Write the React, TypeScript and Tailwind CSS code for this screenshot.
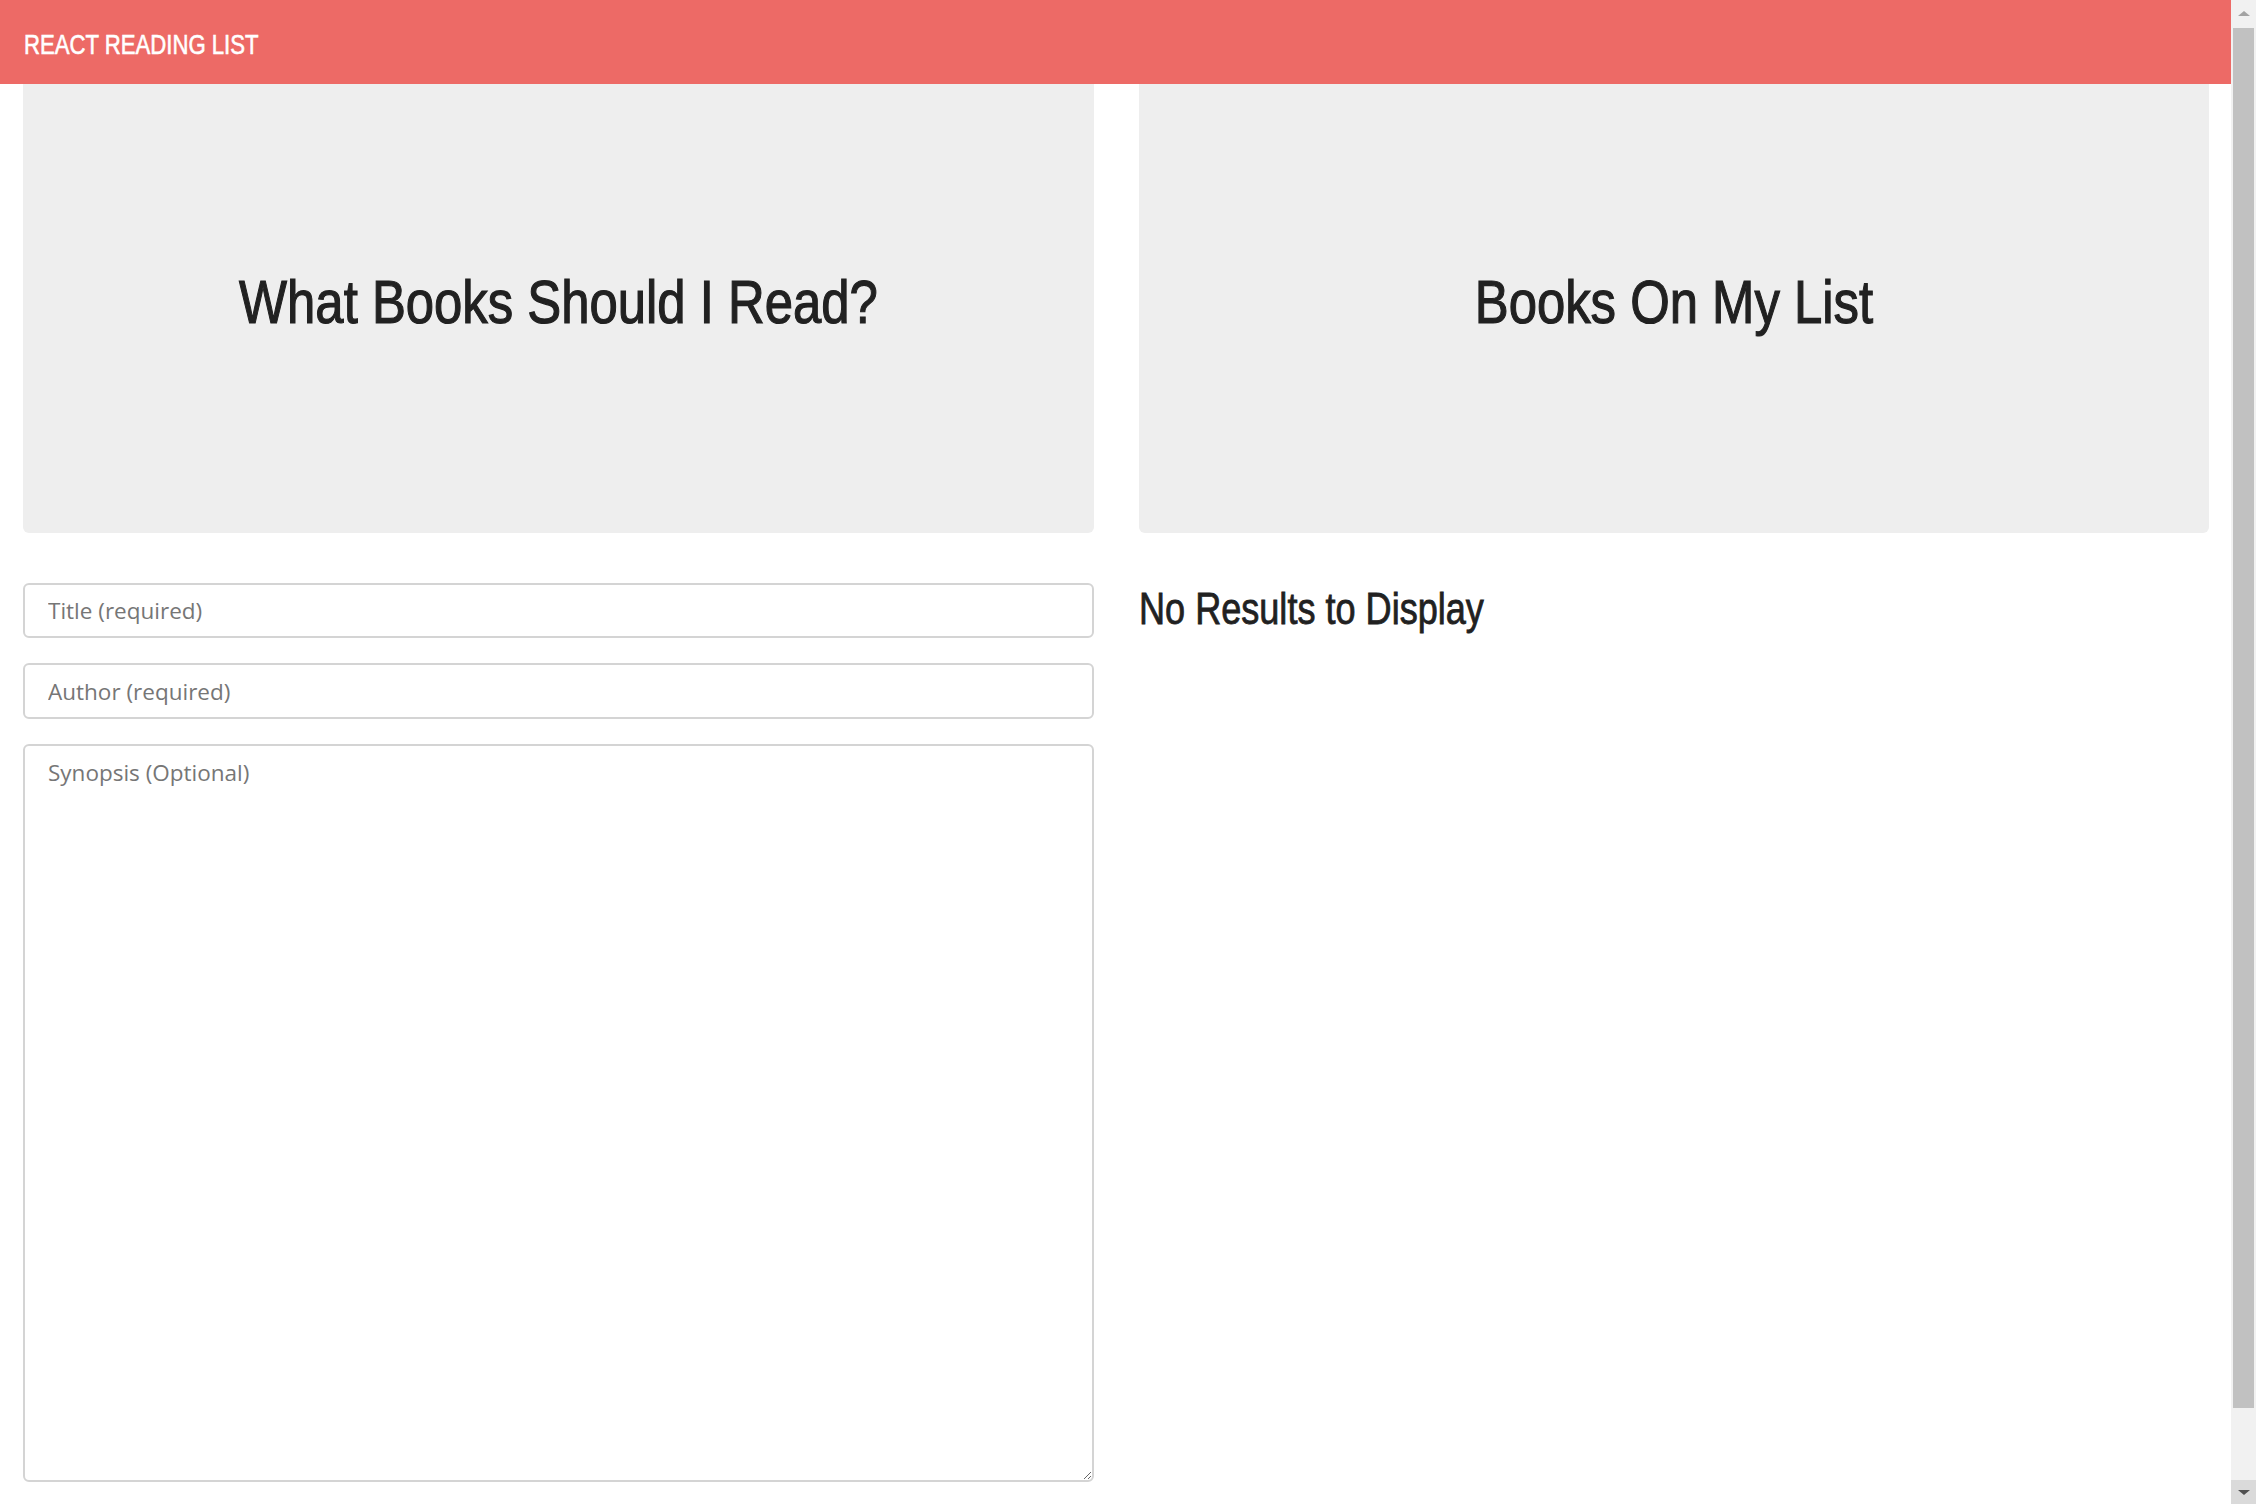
const headingFont =
  "inline-block font-['Liberation_Sans_Narrow','Arial_Narrow','Liberation_Sans',sans-serif] scale-x-[0.82]";

const Jumbotron = ({ title }: { title: string }) => (
  <div className="flex h-[449px] items-center justify-center rounded-b-[6px] bg-[#eeeeee] pb-[14px]">
    <h1 className={`${headingFont} text-[62px] leading-none text-[#212121] [-webkit-text-stroke:1.2px_#212121]`}>
      {title}
    </h1>
  </div>
);

const Scrollbar = () => (
  <div className="flex h-full w-[25px] shrink-0 flex-col bg-[#f1f1f1]">
    <div className="flex h-[26px] items-center justify-center">
      <div className="h-0 w-0 border-x-[6px] border-b-[5px] border-x-transparent border-b-[#a3a3a3]" />
    </div>
    <div className="mx-[2px] mt-[2px] h-[1380px] bg-[#c1c1c1]" />
    <div className="flex-1" />
    <div className="flex h-[24px] items-center justify-center bg-[#dadada]">
      <div className="h-0 w-0 border-x-[6px] border-t-[5px] border-x-transparent border-t-[#505050]" />
    </div>
  </div>
);

const App = () => {
  const fieldClass =
    "w-full rounded-[6px] border-2 border-[#d4d4d4] bg-white px-[23px] font-['Open_Sans',sans-serif] text-[22.5px] text-[#333] placeholder:text-[#767676] outline-none";

  return (
    <div className="flex h-screen w-full overflow-hidden bg-white">
      <div className="min-w-0 flex-1">
        <header className="flex h-[84px] items-center bg-[#ed6a66] px-[24px] pt-[7px]">
          <span className={`${headingFont} origin-left text-[27px] leading-none text-white [-webkit-text-stroke:0.6px_#ffffff]`}>
            REACT READING LIST
          </span>
        </header>
        <main className="grid grid-cols-2 gap-x-[45px] pl-[23px] pr-[22px]">
          <section>
            <Jumbotron title="What Books Should I Read?" />
            <form className="mt-[50px] flex flex-col gap-[25px]">
              <input className={`${fieldClass} h-[55px]`} placeholder="Title (required)" />
              <input className={`${fieldClass} h-[56px]`} placeholder="Author (required)" />
              <textarea className={`${fieldClass} h-[738px] pt-[10px]`} placeholder="Synopsis (Optional)" />
            </form>
          </section>
          <section>
            <Jumbotron title="Books On My List" />
            <div className="mt-[50px]">
              <h2 className={`${headingFont} origin-left text-[44px] leading-[1.2] text-[#212121] [-webkit-text-stroke:0.8px_#212121]`}>
                No Results to Display
              </h2>
            </div>
          </section>
        </main>
      </div>
      <Scrollbar />
    </div>
  );
};

export default App;
